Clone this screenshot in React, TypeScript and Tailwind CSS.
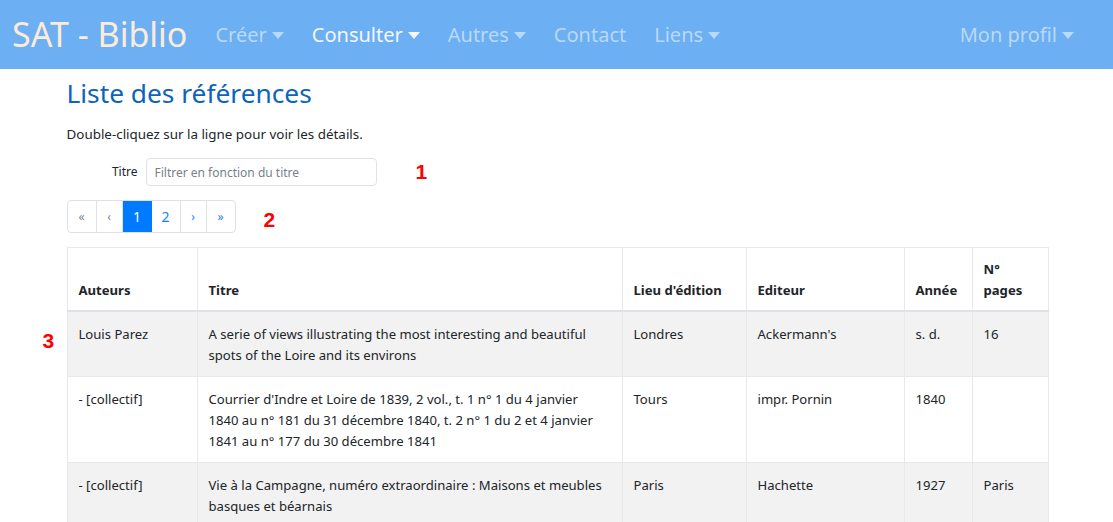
import React from "react"

const navItems = [
    { label: "Créer", caret: true, active: false },
    { label: "Consulter", caret: true, active: true },
    { label: "Autres", caret: true, active: false },
    { label: "Contact", caret: false, active: false },
    { label: "Liens", caret: true, active: false },
]

const rows = [
    {
        auteurs: "Louis Parez",
        titre: "A serie of views illustrating the most interesting and beautiful spots of the Loire and its environs",
        lieu: "Londres",
        editeur: "Ackermann's",
        annee: "s. d.",
        pages: "16",
    },
    {
        auteurs: "- [collectif]",
        titre: "Courrier d'Indre et Loire de 1839, 2 vol., t. 1 n° 1 du 4 janvier 1840 au n° 181 du 31 décembre 1840, t. 2 n° 1 du 2 et 4 janvier 1841 au n° 177 du 30 décembre 1841",
        lieu: "Tours",
        editeur: "impr. Pornin",
        annee: "1840",
        pages: "",
    },
    {
        auteurs: "- [collectif]",
        titre: "Vie à la Campagne, numéro extraordinaire : Maisons et meubles basques et béarnais",
        lieu: "Paris",
        editeur: "Hachette",
        annee: "1927",
        pages: "Paris",
    },
]

function Caret() {
    return (
        <svg width="12" height="7" viewBox="0 0 12 7" className="ml-[5px] mt-[1px]">
            <path d="M0 0 L12 0 L6 7 Z" fill="currentColor" />
        </svg>
    )
}

export default function App() {
    return (
        <div className="min-h-screen bg-white text-[#212529]" style={{ fontFamily: "'Noto Sans', 'Open Sans', sans-serif" }}>
            <nav className="h-[69px] bg-[#6caff3] flex items-center pl-3 pr-[39px]">
                <div className="text-[34px] text-[#fcebd7] leading-none mr-7 -mt-[1px]">SAT - Biblio</div>
                <div className="flex items-center gap-[28px] text-[20px]">
                    {navItems.map((item) => (
                        <div
                            key={item.label}
                            className={`flex items-center ${item.active ? "text-[#f3f6fd]" : "text-[#b9d9fa]"}`}
                        >
                            {item.label}
                            {item.caret && <Caret />}
                        </div>
                    ))}
                </div>
                <div className="ml-auto flex items-center text-[20px] text-[#b9d9fa]">
                    Mon profil
                    <Caret />
                </div>
            </nav>

            <div className="relative w-[980px] mx-auto">
                <h1 className="text-[26.3px] leading-[1.2] text-[#0d64b8] mt-[9px]">Liste des références</h1>
                <p className="text-[13.4px] mt-[14px]">Double-cliquez sur la ligne pour voir les détails.</p>

                <div className="flex items-center mt-[14px]">
                    <label className="w-[79px] text-right pr-[8px] text-[12px]">Titre</label>
                    <input
                        className="w-[231px] h-[28px] border border-[#dfe2e6] rounded-[4px] px-2 text-[12px] placeholder:text-[#7a8088] outline-none"
                        placeholder="Filtrer en fonction du titre"
                    />
                    <span className="ml-[39px] -mt-[2px] text-[21px] font-bold text-[#ff0000]" style={{ fontFamily: "'Liberation Sans', sans-serif" }}>1</span>
                </div>

                <div className="flex items-center mt-[11px]">
                    <div className="flex h-[33px] border border-[#dee2e6] rounded-[4px] text-[12px] text-[#1a7ef5]">
                        <div className="w-[29px] flex items-center justify-center border-r border-[#dee2e6] text-[#7c8790]">«</div>
                        <div className="w-[26px] flex items-center justify-center border-r border-[#dee2e6] text-[#7c8790]">‹</div>
                        <div className="w-[29px] flex items-center justify-center bg-[#007bff] text-white text-[14px]">1</div>
                        <div className="w-[29px] flex items-center justify-center border-r border-[#dee2e6] text-[14px]">2</div>
                        <div className="w-[26px] flex items-center justify-center border-r border-[#dee2e6]">›</div>
                        <div className="w-[28px] flex items-center justify-center">»</div>
                    </div>
                    <span className="ml-[28px] mt-[6px] text-[21px] font-bold text-[#ff0000]" style={{ fontFamily: "'Liberation Sans', sans-serif" }}>2</span>
                </div>

                <span
                    className="absolute left-[-24px] top-[247px] text-[21px] font-bold text-[#ff0000]"
                    style={{ fontFamily: "'Liberation Sans', sans-serif" }}
                >
                    3
                </span>

                <table className="mt-[11px] w-[981px] table-fixed border-collapse text-[13.1px] leading-[21px]">
                    <colgroup>
                        <col className="w-[130px]" />
                        <col className="w-[425px]" />
                        <col className="w-[124px]" />
                        <col className="w-[158px]" />
                        <col className="w-[68px]" />
                        <col className="w-[76px]" />
                    </colgroup>
                    <thead>
                        <tr className="font-bold text-left align-bottom">
                            {["Auteurs", "Titre", "Lieu d'édition", "Editeur", "Année", "N° pages"].map((h) => (
                                <th key={h} className="border border-[#e6e8eb] border-b-2 border-b-[#dee2e6] px-[11px] pt-[11px] pb-[9px] font-bold">
                                    {h}
                                </th>
                            ))}
                        </tr>
                    </thead>
                    <tbody>
                        {rows.map((r, i) => (
                            <tr key={i} className={`align-top ${i % 2 === 0 ? "bg-[#f2f2f2]" : "bg-white"}`}>
                                {[r.auteurs, r.titre, r.lieu, r.editeur, r.annee, r.pages].map((c, j) => (
                                    <td key={j} className="border border-[#e6e8eb] px-[11px] pt-[12px] pb-[10px]">
                                        {c}
                                    </td>
                                ))}
                            </tr>
                        ))}
                    </tbody>
                </table>
            </div>
        </div>
    )
}
